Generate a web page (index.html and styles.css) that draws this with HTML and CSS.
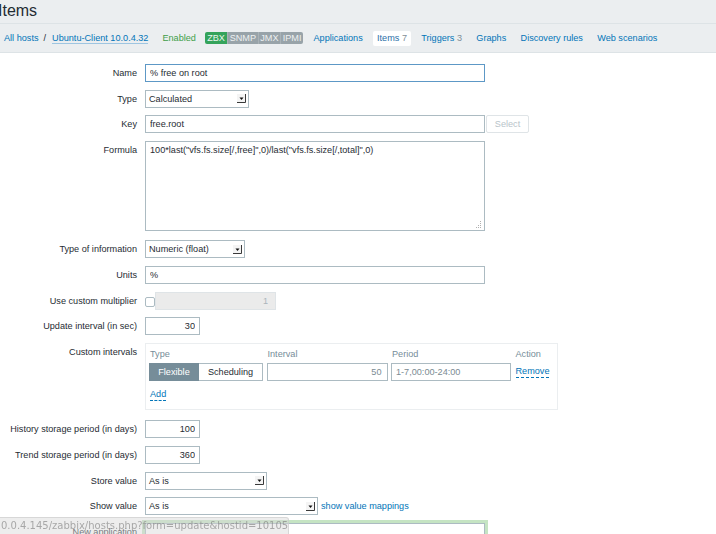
FILE: index.html
```html
<!DOCTYPE html>
<html lang="en">
<head>
<meta charset="utf-8">
<title>Items</title>
<link rel="stylesheet" href="styles.css">
</head>
<body>
<header class="page-header">
  <h1 class="page-title">Items</h1>
</header>
<nav class="host-nav">
  <ul class="breadcrumbs">
    <li><a class="link" href="#">All hosts</a></li>
    <li class="sep">/</li>
    <li><a class="link host-link" href="#">Ubuntu-Client 10.0.4.32</a></li>
  </ul>
  <span class="status-enabled">Enabled</span>
  <div class="avail">
    <span class="badge badge-on">ZBX</span><span class="badge">SNMP</span><span class="badge">JMX</span><span class="badge">IPMI</span>
  </div>
  <ul class="tabs">
    <li><a class="link" href="#">Applications</a></li>
    <li class="active"><span class="tab-name">Items</span> <span class="count">7</span></li>
    <li><a class="link" href="#">Triggers</a> <span class="count">3</span></li>
    <li><a class="link" href="#">Graphs</a></li>
    <li><a class="link" href="#">Discovery rules</a></li>
    <li><a class="link" href="#">Web scenarios</a></li>
  </ul>
</nav>

<form class="item-form">
  <div class="row">
    <label class="label">Name</label>
    <input class="input input-wide input-focus" type="text" value="% free on root">
  </div>
  <div class="row">
    <label class="label">Type</label>
    <div class="select select-type"><span>Calculated</span><svg class="arrow" width="9" height="9" viewBox="0 0 9 9"><rect width="9" height="9" fill="#f4f4f4"/><path d="M8.5 0V8.5H0" stroke="#3a3a3a" fill="none"/><path d="M2.5 3.5H6.5L4.5 6Z" fill="#111"/></svg></div>
  </div>
  <div class="row">
    <label class="label">Key</label>
    <input class="input input-wide" type="text" value="free.root">
    <button class="btn-select" type="button">Select</button>
  </div>
  <div class="row row-formula">
    <label class="label">Formula</label>
    <div class="formula">
      <textarea class="textarea">100*last("vfs.fs.size[/,free]",0)/last("vfs.fs.size[/,total]",0)</textarea>
      <svg class="grip" width="7" height="7" viewBox="0 0 7 7"><g fill="#b0b0b0"><rect x="1" y="6" width="1" height="1"/><rect x="3" y="4" width="1" height="1"/><rect x="3" y="6" width="1" height="1"/><rect x="5" y="2" width="1" height="1"/><rect x="5" y="4" width="1" height="1"/><rect x="5" y="6" width="1" height="1"/><rect x="5" y="0" width="1" height="1"/></g></svg>
    </div>
  </div>
  <div class="row row-typeinfo">
    <label class="label">Type of information</label>
    <div class="select select-info"><span>Numeric (float)</span><svg class="arrow" width="9" height="9" viewBox="0 0 9 9"><rect width="9" height="9" fill="#f4f4f4"/><path d="M8.5 0V8.5H0" stroke="#3a3a3a" fill="none"/><path d="M2.5 3.5H6.5L4.5 6Z" fill="#111"/></svg></div>
  </div>
  <div class="row">
    <label class="label">Units</label>
    <input class="input input-wide" type="text" value="%">
  </div>
  <div class="row">
    <label class="label">Use custom multiplier</label>
    <input class="checkbox" type="checkbox">
    <input class="input input-mult" type="text" value="1" disabled>
  </div>
  <div class="row">
    <label class="label">Update interval (in sec)</label>
    <input class="input input-num" type="text" value="30">
  </div>
  <div class="row row-intervals">
    <label class="label">Custom intervals</label>
    <div class="intervals">
      <div class="intervals-grid">
        <div class="col-head">Type</div>
        <div class="col-head">Interval</div>
        <div class="col-head">Period</div>
        <div class="col-head">Action</div>
        <div class="radio-group"><span class="radio radio-on">Flexible</span><span class="radio">Scheduling</span></div>
        <input class="input input-interval" type="text" value="50">
        <input class="input input-period" type="text" value="1-7,00:00-24:00">
        <a class="link link-dashed action" href="#">Remove</a>
      </div>
      <a class="link link-dashed add" href="#">Add</a>
    </div>
  </div>
  <div class="row">
    <label class="label">History storage period (in days)</label>
    <input class="input input-num" type="text" value="100">
  </div>
  <div class="row">
    <label class="label">Trend storage period (in days)</label>
    <input class="input input-num" type="text" value="360">
  </div>
  <div class="row">
    <label class="label">Store value</label>
    <div class="select select-store"><span>As is</span><svg class="arrow" width="9" height="9" viewBox="0 0 9 9"><rect width="9" height="9" fill="#f4f4f4"/><path d="M8.5 0V8.5H0" stroke="#3a3a3a" fill="none"/><path d="M2.5 3.5H6.5L4.5 6Z" fill="#111"/></svg></div>
  </div>
  <div class="row">
    <label class="label">Show value</label>
    <div class="select select-show"><span>As is</span><svg class="arrow" width="9" height="9" viewBox="0 0 9 9"><rect width="9" height="9" fill="#f4f4f4"/><path d="M8.5 0V8.5H0" stroke="#3a3a3a" fill="none"/><path d="M2.5 3.5H6.5L4.5 6Z" fill="#111"/></svg></div>
    <a class="link mappings" href="#">show value mappings</a>
  </div>
  <div class="row">
    <label class="label">New application</label>
    <input class="input input-wide input-glow" type="text" value="">
  </div>
</form>

<div class="status-bubble">0.0.4.145/zabbix/hosts.php?form=update&amp;hostid=10105</div>
</body>
</html>
```

FILE: styles.css
```css
* { box-sizing: border-box; }

html, body {
  margin: 0;
  padding: 0;
}

body {
  width: 716px;
  height: 534px;
  overflow: hidden;
  background: #ffffff;
  color: #1f2c33;
  font-family: "Liberation Sans", Arial, sans-serif;
  font-size: 9.15px;
}

ul { list-style: none; margin: 0; padding: 0; }

.link { color: #0275b8; text-decoration: none; }

/* header */
.page-header {
  height: 24px;
  background: #ebeef0;
  border-bottom: 1px solid #dde3e6;
}
.page-title {
  margin: 0 0 0 -2px;
  font-size: 16px;
  font-weight: normal;
  line-height: 21px;
  color: #1f2c33;
}

/* host navigation */
.host-nav {
  height: 29px;
  display: flex;
  align-items: center;
  padding-left: 4px;
  background: #ebeef0;
  border-bottom: 1px solid #dde3e6;
}
.breadcrumbs { display: flex; align-items: center; gap: 5px; }
.sep { color: #1f2c33; margin-right: 1px; }
.host-link { border-bottom: 1px solid #9ec5e1; }
.status-enabled { color: #3f9e49; margin-left: 14px; }
.avail { display: flex; margin-left: 9px; }
.badge {
  height: 12px;
  line-height: 12px;
  padding: 0 1.6px;
  background: #98a3a9;
  color: #eef1f2;
  border-left: 1px solid #a9b2b7;
}
.badge:first-child { border-left: 0; }
.badge-on { background: #34a35b; color: #e9f6ee; padding: 0 2.2px; }
.badge:last-child { border-radius: 0 2px 2px 0; }
.badge-on { border-radius: 2px 0 0 2px; }

.tabs { display: flex; align-items: center; gap: 5.3px; margin-left: 6px; }
.tabs li {
  height: 15px;
  line-height: 15px;
  padding: 0 4.5px;
  border-radius: 2px;
}
.tabs li.active { background: #ffffff; }
.tab-name { color: #2b6fa8; }
.count { color: #7f8f98; }

/* form */
.item-form { padding-top: 11px; }
.row {
  display: flex;
  align-items: flex-start;
  margin-bottom: 7.6px;
}
.label {
  flex: 0 0 137px;
  margin-right: 8px;
  text-align: right;
  line-height: 18px;
  white-space: nowrap;
}

.input {
  height: 18px;
  border: 1px solid #acbbc2;
  padding: 0 4px;
  font: inherit;
  color: #1f2c33;
  background: #ffffff;
  outline: none;
  border-radius: 0;
}
.input-wide { width: 340px; }
.input-focus { border-color: #5d98c6; }
.input-num { width: 55px; text-align: right; }
.input-glow { box-shadow: 0 0 0 3px rgba(150, 205, 145, 0.55); }

.select {
  height: 18px;
  border: 1px solid #acbbc2;
  padding: 0 2px 0 3px;
  display: flex;
  align-items: center;
  justify-content: space-between;
  background: #ffffff;
}
.arrow { display: block; }
.select-type { width: 104px; }
.select-info { width: 100px; }
.select-store { width: 122px; }
.select-show { width: 173px; }

.btn-select {
  height: 18px;
  width: 43px;
  margin-left: 1px;
  border: 1px solid #dfe4e7;
  border-radius: 2px;
  background: #ffffff;
  color: #b9c4ca;
  font: inherit;
  padding: 0;
}

.row-formula { margin-bottom: 9.6px; }
.formula { position: relative; width: 340px; height: 90px; }
.textarea {
  display: block;
  width: 340px;
  height: 90px;
  border: 1px solid #acbbc2;
  padding: 2px 4px;
  font: inherit;
  line-height: 12px;
  color: #1f2c33;
  resize: none;
  outline: none;
}
.grip { position: absolute; right: 3px; bottom: 3px; }

.checkbox {
  appearance: none;
  -webkit-appearance: none;
  width: 10px;
  height: 10px;
  margin: 5px 0 0 0;
  border: 1px solid #acbbc2;
  border-radius: 2px;
  background: #ffffff;
}
.input-mult {
  width: 121px;
  background: #ebebeb;
  border-color: #dfe4e7;
  color: #aab5bb;
  text-align: right;
  padding-right: 7px;
}

.row-intervals { margin-bottom: 10.6px; }
.intervals {
  width: 413px;
  height: 67px;
  border: 1px solid #ebeef0;
  padding: 4px 3px 0 3px;
}
.intervals-grid {
  display: grid;
  grid-template-columns: 114px 121px 120px auto;
  column-gap: 3.5px;
  row-gap: 3.5px;
  align-items: center;
}
.col-head { color: #768d99; line-height: 12px; padding-left: 1px; }
.radio-group { display: flex; height: 18px; }
.radio {
  height: 18px;
  line-height: 16px;
  border: 1px solid #acbbc2;
  text-align: center;
  background: #ffffff;
  color: #1f2c33;
}
.radio:first-child { width: 50px; }
.radio:last-child { width: 64px; border-left: 0; }
.radio-on { background: #768d99; border-color: #768d99; color: #ffffff; }
.input-interval { width: 121px; text-align: right; color: #7b8b93; padding-right: 5px; }
.input-period { width: 120px; color: #7b8b93; }
.link-dashed { border-bottom: 1px dashed #0275b8; line-height: 11px; }
.action { justify-self: start; margin-left: 1px; }
.add { display: inline-block; margin: 8px 0 0 1px; }

.mappings { margin-left: 3px; line-height: 18px; }

/* browser status bubble */
.status-bubble {
  position: fixed;
  left: 0;
  bottom: 0;
  width: 289px;
  height: 17px;
  padding-left: 1px;
  background: rgba(214, 214, 214, 0.45);
  border-top: 1px solid rgba(200, 200, 200, 0.6);
  border-right: 1px solid rgba(200, 200, 200, 0.6);
  border-top-right-radius: 3px;
  color: rgba(120, 120, 120, 0.6);
  font-family: "DejaVu Sans", sans-serif;
  font-size: 10px;
  line-height: 16px;
  white-space: nowrap;
}
```
